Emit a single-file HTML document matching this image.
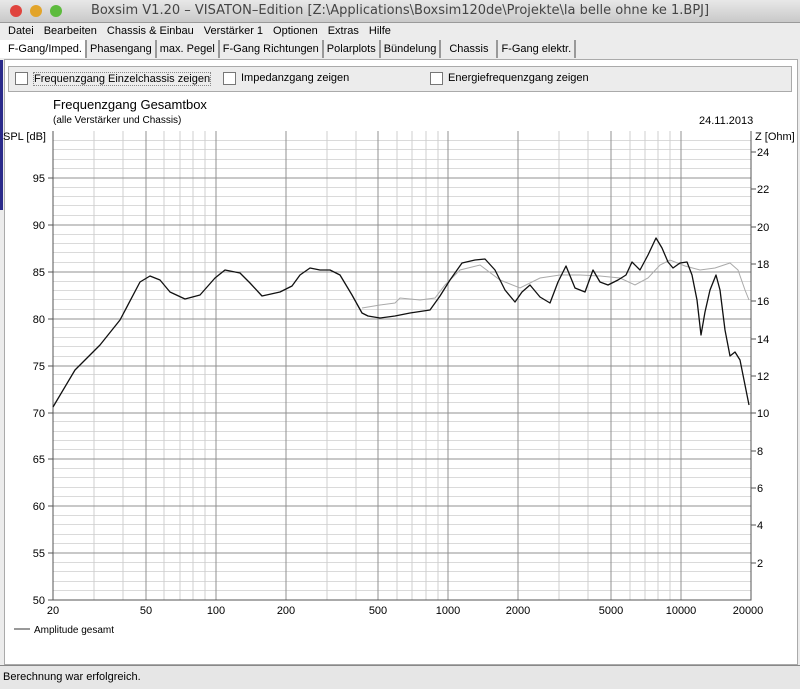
<!DOCTYPE html>
<html><head><meta charset="utf-8"><style>
body{margin:0;width:800px;height:688px;overflow:hidden;background:#ececec;font-family:"Liberation Sans",sans-serif;font-size:11px;color:#000;position:relative}
.abs{position:absolute}
#title{left:0;top:0;width:800px;height:22px;background:linear-gradient(#e8e8e8,#c9c9c9);border-bottom:1px solid #9a9a9a;text-align:center;font-size:13px;line-height:22px;color:#444;font-family:"DejaVu Sans",sans-serif}
.dot{position:absolute;top:5px;width:12px;height:12px;border-radius:50%}
#menu{left:0;top:23px;width:800px;height:16px;line-height:16px}
#menu span{margin-left:8px;margin-right:2px}
#tabs{left:0;top:40px;height:18px;line-height:18px}
#tabs span{display:inline-block;padding:0 3px;border-right:2px solid #999;margin-right:0}
#panel{left:4px;top:59px;width:792px;height:604px;background:#fff;border:1px solid #aaa}
#grp{left:8px;top:66px;width:782px;height:24px;background:#ececec;border:1px solid #aaa}
.cb{position:absolute;top:5px;width:11px;height:11px;border:1px solid #777;background:#fff}
#status{left:0;top:665px;width:800px;height:23px;background:#e6e6e6;border-top:1px solid #888;line-height:22px}
</style></head><body>
<div class="abs" id="title">Boxsim V1.20 – VISATON–Edition [Z:\Applications\Boxsim120de\Projekte\la belle ohne ke 1.BPJ]
<div class="dot" style="left:10px;background:#e0443e"></div><div class="dot" style="left:30px;background:#e2a42a"></div><div class="dot" style="left:50px;background:#5dbb3d"></div></div>
<div class="abs" id="menu"><span>Datei</span><span>Bearbeiten</span><span>Chassis &amp; Einbau</span><span>Verstärker 1</span><span>Optionen</span><span>Extras</span><span>Hilfe</span></div>
<div class="abs" id="panel"></div>
<div class="abs" id="tabs"><span style="background:#fff;padding-left:8px">F-Gang/Imped.</span><span>Phasengang</span><span>max. Pegel</span><span>F-Gang Richtungen</span><span>Polarplots</span><span>Bündelung</span><span style="padding:0 8px">Chassis</span><span>F-Gang elektr.</span></div>
<div class="abs" style="left:0;top:60px;width:3px;height:150px;background:#2a2a8a"></div>
<div class="abs" id="grp"><div class="cb" style="left:6px"></div><span class="abs" style="left:24px;top:5px;border:1px dotted #888">Frequenzgang Einzelchassis zeigen</span>
<div class="cb" style="left:214px"></div><span class="abs" style="left:232px;top:5px">Impedanzgang zeigen</span>
<div class="cb" style="left:421px"></div><span class="abs" style="left:439px;top:5px">Energiefrequenzgang zeigen</span></div>
<div class="abs" style="left:53px;top:97px;font-size:13px">Frequenzgang Gesamtbox</div>
<div class="abs" style="left:53px;top:115px;font-size:10px">(alle Verstärker und Chassis)</div>
<div class="abs" style="left:699px;top:115px">24.11.2013</div>
<svg class="abs" style="left:0;top:0" width="800" height="688" font-family="Liberation Sans" font-size="11">
<rect x="53" y="131" width="698" height="469" fill="#fff"/>
<g stroke="#dadada" fill="none">
<path d="M53 590.5H751M53 581.5H751M53 571.5H751M53 562.5H751M53 543.5H751M53 534.5H751M53 524.5H751M53 515.5H751M53 496.5H751M53 487.5H751M53 477.5H751M53 468.5H751M53 449.5H751M53 440.5H751M53 431.5H751M53 421.5H751M53 402.5H751M53 393.5H751M53 384.5H751M53 374.5H751M53 356.5H751M53 346.5H751M53 337.5H751M53 327.5H751M53 309.5H751M53 299.5H751M53 290.5H751M53 281.5H751M53 262.5H751M53 252.5H751M53 243.5H751M53 234.5H751M53 215.5H751M53 205.5H751M53 196.5H751M53 187.5H751M53 168.5H751M53 159.5H751M53 149.5H751M53 140.5H751"/>
<path d="M94 131V600M123 131V600M164 131V600M180 131V600M193 131V600M205 131V600M327 131V600M356 131V600M397 131V600M412 131V600M426 131V600M438 131V600M559 131V600M588 131V600M630 131V600M645 131V600M658 131V600M670 131V600" stroke="#cfcfcf"/></g>
<g stroke="#909090" fill="none">
<path d="M146 131V600M216 131V600M286 131V600M378 131V600M448 131V600M518 131V600M611 131V600M681 131V600"/>
<path d="M53 178H751M53 225H751M53 272H751M53 319H751M53 366H751M53 413H751M53 459H751M53 506H751M53 553H751"/></g>
<g stroke="#555" fill="none"><path d="M53 131V600H751V131"/><path d="M48 178H53M48 225H53M48 272H53M48 319H53M48 366H53M48 413H53M48 459H53M48 506H53M48 553H53M48 600H53"/>
<path d="M751 152H756M751 189H756M751 227H756M751 264H756M751 301H756M751 339H756M751 376H756M751 413H756M751 451H756M751 488H756M751 525H756M751 563H756"/></g>
<g text-anchor="end"><text x="46" y="140">SPL [dB]</text><text x="45" y="182">95</text><text x="45" y="229">90</text><text x="45" y="276">85</text><text x="45" y="323">80</text><text x="45" y="370">75</text><text x="45" y="417">70</text><text x="45" y="463">65</text><text x="45" y="510">60</text><text x="45" y="557">55</text><text x="45" y="604">50</text></g>
<text x="755" y="140">Z [Ohm]</text>
<g><text x="757" y="156">24</text><text x="757" y="193">22</text><text x="757" y="231">20</text><text x="757" y="268">18</text><text x="757" y="305">16</text><text x="757" y="343">14</text><text x="757" y="380">12</text><text x="757" y="417">10</text><text x="757" y="455">8</text><text x="757" y="492">6</text><text x="757" y="529">4</text><text x="757" y="567">2</text></g>
<g text-anchor="middle"><text x="53" y="614">20</text><text x="146" y="614">50</text><text x="216" y="614">100</text><text x="286" y="614">200</text><text x="378" y="614">500</text><text x="448" y="614">1000</text><text x="518" y="614">2000</text><text x="611" y="614">5000</text><text x="681" y="614">10000</text><text x="748" y="614">20000</text></g>
<line x1="14" y1="629" x2="30" y2="629" stroke="#333"/><text x="34" y="633" font-size="10">Amplitude gesamt</text>
<polyline fill="none" stroke="#aaa" stroke-width="1" points="362,308 380,305 395,303 400,298 420,300 435,298 445,285 460,270 480,265 500,280 520,288 540,278 560,275 580,275 600,276 620,278 635,285 648,278 660,265 670,260 685,266 700,270 715,268 730,263 738,270 745,290 749,300"/>
<polyline fill="none" stroke="#111" stroke-width="1.3" stroke-linejoin="round" points="53,407 75,370 100,345 120,320 140,282 150,276 160,280 170,292 185,299 200,295 215,278 225,270 240,273 250,283 262,296 280,292 292,286 300,275 310,268 320,270 330,270 340,275 352,295 362,313 368,316 380,318 395,316 410,313 430,310 440,296 450,280 462,263 475,260 485,259 495,270 505,290 515,302 522,292 530,285 540,297 550,303 558,282 566,266 575,288 585,292 593,270 600,282 608,285 618,280 626,275 632,262 640,270 648,255 656,238 662,248 668,262 673,268 680,263 687,262 692,275 697,300 701,335 705,312 710,290 716,275 720,290 725,330 730,356 735,352 740,360 745,385 749,405"/>
</svg>
<div class="abs" id="status">&nbsp;Berechnung war erfolgreich.</div>
</body></html>
